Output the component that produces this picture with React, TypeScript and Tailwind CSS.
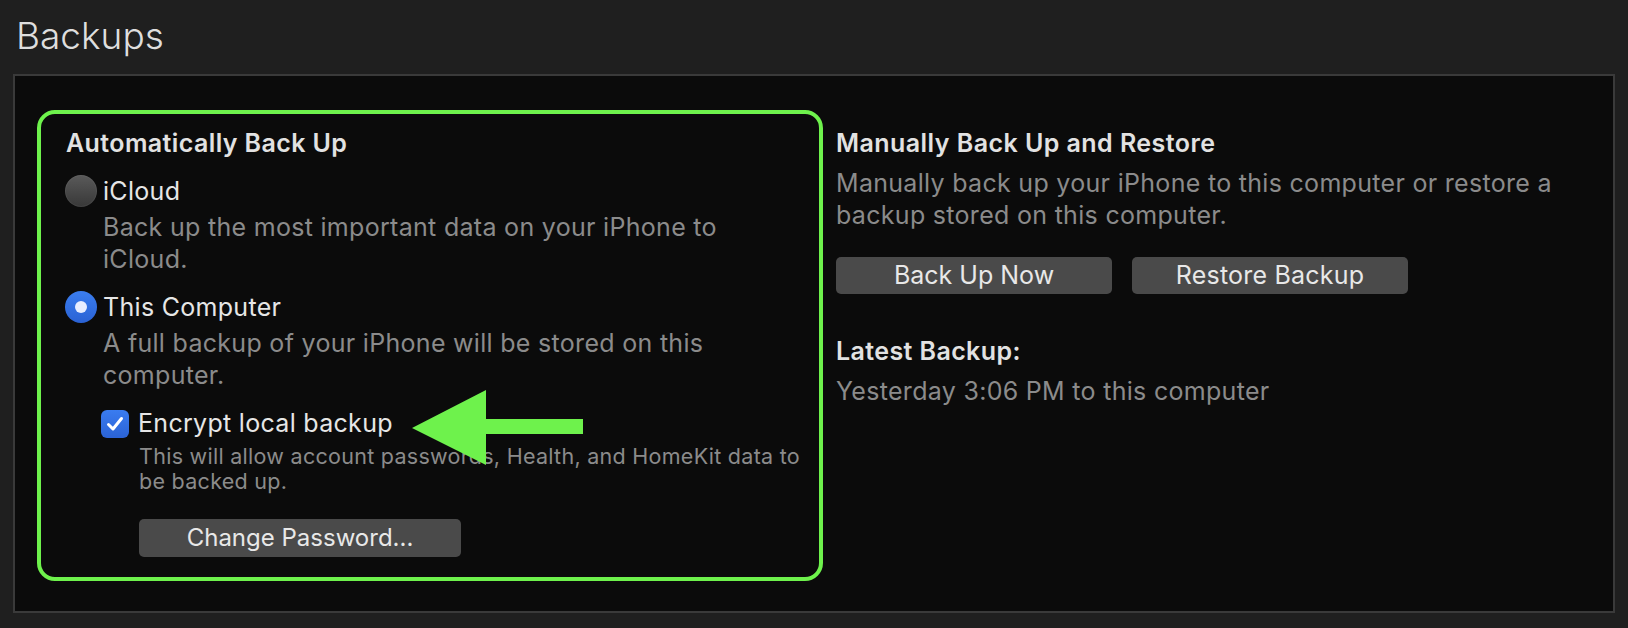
import React from 'react';

const BackupsPanel: React.FC = () => {
  return (
    <div className="relative w-[1628px] h-[628px] bg-[#1f1f1f] overflow-hidden font-['Inter','Liberation_Sans',sans-serif]">
      {/* Title */}
      <h1 className="pl-[16px] pt-[13px] text-[37px] leading-[46px] font-light text-[#dedede]">
        Backups
      </h1>

      {/* Panel */}
      <div className="mx-[13px] mt-[15px] h-[539px] border-2 border-[#3a3a3a] bg-[#0b0b0b] flex items-start pt-[34px] pl-[22px]">
        {/* Automatically Back Up (highlighted) */}
        <div className="w-[786px] h-[471px] shrink-0 border-4 border-[#6ef24c] rounded-[18px] pt-[14px] pl-[24px]">
          <h2 className="ml-px text-[25px] leading-[31px] tracking-[0.4px] font-semibold text-[#e2e2e2]">
            Automatically Back Up
          </h2>

          {/* iCloud */}
          <div className="mt-[16px] flex items-center gap-[6px]">
            <span className="w-[32px] h-[32px] rounded-full bg-gradient-to-b from-[#5a5a5a] to-[#383838] shadow-[inset_0_0_0_1px_rgba(255,255,255,0.05)]" />
            <span className="text-[25px] leading-[31px] tracking-[0.3px] text-[#e6e6e6]">iCloud</span>
          </div>
          <p className="mt-[4px] pl-[38px] text-[25px] leading-[32px] tracking-[0.3px] text-[#8b8b8b]">
            Back up the most important data on your iPhone to
            <br />
            iCloud.
          </p>

          {/* This Computer */}
          <div className="mt-[16px] flex items-center gap-[6px]">
            <span className="w-[32px] h-[32px] rounded-full bg-gradient-to-b from-[#3b7ef0] to-[#2a62d4] flex items-center justify-center">
              <span className="w-[12px] h-[12px] rounded-full bg-[#e8eeff]" />
            </span>
            <span className="text-[25px] leading-[31px] tracking-[0.3px] text-[#e6e6e6]">This Computer</span>
          </div>
          <p className="mt-[4px] pl-[38px] text-[25px] leading-[32px] tracking-[0.3px] text-[#8b8b8b]">
            A full backup of your iPhone will be stored on this
            <br />
            computer.
          </p>

          {/* Encrypt */}
          <div className="mt-[17px] ml-[36px] flex items-center gap-[9px]">
            <span className="w-[28px] h-[28px] rounded-[6px] bg-gradient-to-b from-[#3a7cf0] to-[#2b63d6] flex items-center justify-center">
              <svg width="18" height="16" viewBox="0 0 18 16" fill="none">
                <path d="M2.5 8.5 L7 13 L15.5 2.5" stroke="#ffffff" strokeWidth="3" strokeLinecap="round" strokeLinejoin="round" />
              </svg>
            </span>
            <span className="text-[25px] leading-[31px] tracking-[0.3px] text-[#e6e6e6]">Encrypt local backup</span>
          </div>
          <p className="mt-[5px] ml-[74px] text-[21.5px] leading-[25px] tracking-[0.28px] text-[#8b8b8b]">
            This will allow account passwords, Health, and HomeKit data to
            <br />
            be backed up.
          </p>
          <button className="mt-[25px] ml-[74px] w-[322px] h-[38px] rounded-[5px] bg-[#4a4a4a] text-[24px] leading-[38px] text-[#e8e8e8] text-center">
            Change Password...
          </button>
        </div>

        {/* Manually Back Up and Restore */}
        <div className="ml-[13px] pt-[18px] flex flex-col">
          <h2 className="text-[25px] leading-[31px] tracking-[0.45px] font-semibold text-[#e2e2e2]">
            Manually Back Up and Restore
          </h2>
          <p className="mt-[8px] text-[25px] leading-[32px] tracking-[0.3px] text-[#8b8b8b]">
            Manually back up your iPhone to this computer or restore a
            <br />
            backup stored on this computer.
          </p>
          <div className="mt-[26px] flex gap-[20px]">
            <button className="w-[276px] h-[37px] rounded-[5px] bg-[#4a4a4a] text-[25px] leading-[37px] text-[#e8e8e8]">
              Back Up Now
            </button>
            <button className="w-[276px] h-[37px] rounded-[5px] bg-[#4a4a4a] text-[25px] leading-[37px] tracking-[0.2px] text-[#e8e8e8]">
              Restore Backup
            </button>
          </div>
          <h2 className="mt-[42px] text-[25px] leading-[31px] tracking-[0.4px] font-semibold text-[#e2e2e2]">
            Latest Backup:
          </h2>
          <p className="mt-[9px] text-[25px] leading-[31px] tracking-[0.3px] text-[#8b8b8b]">
            Yesterday 3:06 PM to this computer
          </p>
        </div>
      </div>

      {/* Annotation arrow */}
      <svg className="absolute left-[412px] top-[390px]" width="172" height="76" viewBox="0 0 172 76">
        <polygon points="0,38 74,0 74,29 171,29 171,44 74,44 74,75" fill="#6ef24c" />
      </svg>
    </div>
  );
};

export default function App() {
  return <BackupsPanel />;
}
